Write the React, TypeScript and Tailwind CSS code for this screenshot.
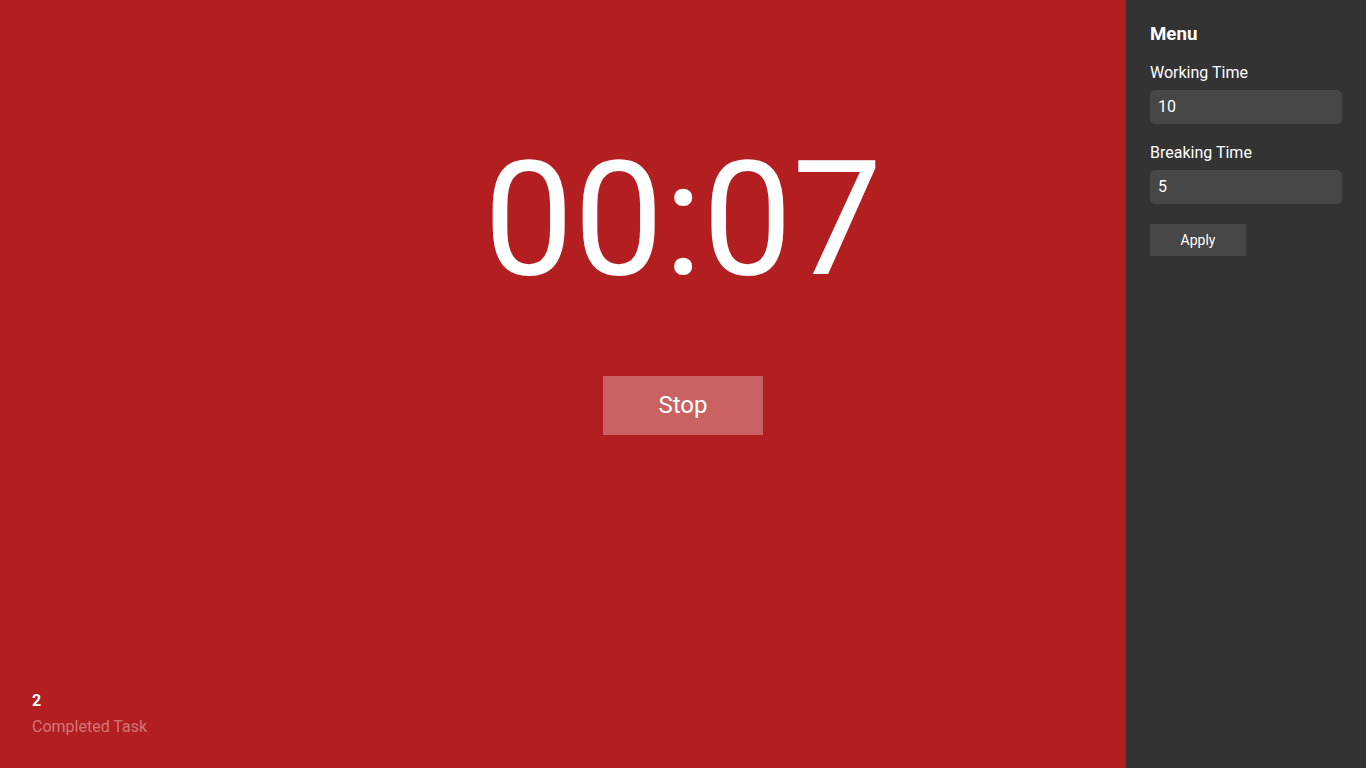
import React from "react";

export default function App() {
  return (
    <div
      className="relative w-full h-[768px] overflow-hidden bg-[#b31e20] text-white"
      style={{ fontFamily: "Roboto, 'Liberation Sans', sans-serif" }}
    >
      <div className="flex h-full flex-col items-center">
        <div className="mt-[140px] text-[160px] leading-none font-normal">00:07</div>
        <button className="mt-[76px] flex h-[59px] w-[160px] items-center justify-center bg-white/30 pb-[2px] text-[24px] text-white">
          Stop
        </button>
        <div className="mt-auto self-start pl-8 pb-[29px]">
          <div className="mb-[2px] text-base leading-6 font-bold">2</div>
          <div className="text-base leading-6 text-white/40">Completed Task</div>
        </div>
      </div>

      <aside className="absolute top-0 right-0 flex h-full w-[240px] flex-col bg-[#333333] px-6 pt-6">
        <div className="text-[18.72px] font-bold leading-[21px]">Menu</div>
        <label className="mt-[18px] block text-base leading-[19px]">Working Time</label>
        <input
          className="mt-2 h-[34px] w-[192px] rounded-[5px] bg-[#474747] px-2 pb-[2px] text-base text-white outline-none"
          defaultValue="10"
        />
        <label className="mt-[19px] block text-base leading-[19px]">Breaking Time</label>
        <input
          className="mt-2 h-[34px] w-[192px] rounded-[5px] bg-[#474747] px-2 pb-[2px] text-base text-white outline-none"
          defaultValue="5"
        />
        <button className="mt-5 h-8 w-24 bg-[#474747] text-sm text-white">Apply</button>
      </aside>
    </div>
  );
}
